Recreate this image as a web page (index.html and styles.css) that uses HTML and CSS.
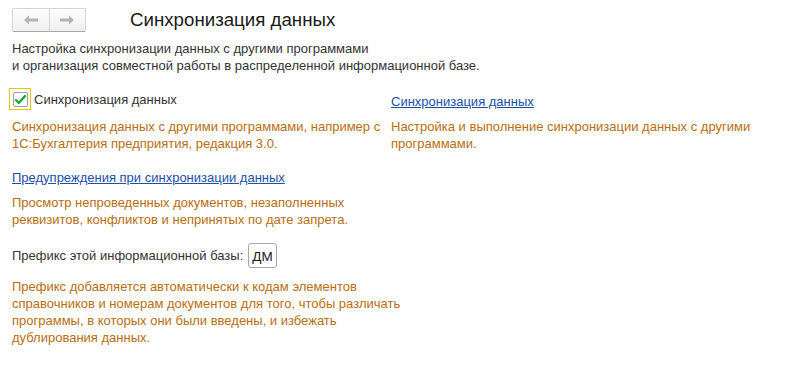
FILE: index.html
```html
<!DOCTYPE html>
<html lang="ru">
<head>
  <meta charset="UTF-8">
  <title>Синхронизация данных</title>
  <link rel="stylesheet" href="styles.css">
</head>
<body>
  <div class="page">
    <div class="header">
      <div class="nav">
        <button class="nav-btn" title="Назад">
          <svg width="16" height="12" viewBox="0 0 16 12"><path d="M1 6 L6 1.5 L6 4.5 L15 4.5 L15 7.5 L6 7.5 L6 10.5 Z" fill="#b4b4b4"/></svg>
        </button>
        <button class="nav-btn" title="Вперед">
          <svg width="16" height="12" viewBox="0 0 16 12"><path d="M15 6 L10 1.5 L10 4.5 L1 4.5 L1 7.5 L10 7.5 L10 10.5 Z" fill="#b4b4b4"/></svg>
        </button>
      </div>
      <h1 class="title">Синхронизация данных</h1>
    </div>

    <p class="intro">Настройка синхронизации данных с другими программами<br>и организация совместной работы в распределенной информационной базе.</p>

    <div class="columns">
      <div class="col-left">
        <label class="check-row">
          <span class="check-focus">
            <span class="check-box">
              <svg width="15" height="13" viewBox="0 0 15 13"><path d="M1.5 6.5 L5.5 10.5 L13.5 1.5" fill="none" stroke="#1aa33a" stroke-width="2.6"/></svg>
            </span>
          </span>
          <span>Синхронизация данных</span>
        </label>
        <p class="hint">Синхронизация данных с другими программами, например с 1С:Бухгалтерия предприятия, редакция 3.0.</p>
      </div>

      <div class="col-right">
        <div class="link-row">
          <a class="link" href="#">Синхронизация данных</a>
        </div>
        <p class="hint">Настройка и выполнение синхронизации данных с другими программами.</p>
      </div>
    </div>

    <div class="lower">
      <a class="link link-block" href="#">Предупреждения при синхронизации данных</a>
      <p class="hint hint-tight">Просмотр непроведенных документов, незаполненных<br>реквизитов, конфликтов и непринятых по дате запрета.</p>

      <div class="prefix-row">
        <span>Префикс этой информационной базы:</span>
        <span class="prefix-input">ДМ</span>
      </div>
      <p class="hint hint-prefix">Префикс добавляется автоматически к кодам элементов<br>справочников и номерам документов для того, чтобы различать<br>программы, в которых они были введены, и избежать<br>дублирования данных.</p>
    </div>
  </div>
</body>
</html>
```

FILE: styles.css
```css
body {
  margin: 0;
  background: #fff;
  font-family: Arial, "Liberation Sans", sans-serif;
  font-size: 13px;
  line-height: 17px;
  color: #333;
}

.page {
  padding: 8px 12px;
}

.header {
  display: flex;
  align-items: center;
  height: 24px;
}

.nav {
  display: flex;
  width: 74px;
  height: 24px;
  box-sizing: border-box;
  border: 1px solid #d4d4d4;
  border-bottom-color: #a8a8a8;
  border-radius: 2px;
  background: linear-gradient(#fdfdfd, #efefef);
}

.nav-btn {
  flex: 1;
  display: flex;
  align-items: center;
  justify-content: center;
  border: none;
  background: none;
  padding: 0;
}

.nav-btn + .nav-btn {
  border-left: 1px solid #d4d4d4;
}

.title {
  margin: 0 0 0 44px;
  font-size: 18.7px;
  font-weight: normal;
  color: #1a1a1a;
  line-height: 24px;
}

.intro {
  margin: 8px 0 0;
}

.columns {
  display: flex;
  margin-top: 14px;
}

.col-left {
  width: 379px;
}

.col-right {
  flex: 1;
}

.check-row {
  display: flex;
  align-items: center;
  height: 22px;
  margin-left: -3px;
}

.check-focus {
  width: 22px;
  height: 22px;
  box-sizing: border-box;
  border: 1px solid #f2c200;
  display: flex;
  align-items: center;
  justify-content: center;
  margin-right: 3px;
}

.check-box {
  width: 15px;
  height: 15px;
  box-sizing: border-box;
  border: 1px solid #a0a0a0;
  border-radius: 2px;
  background: #fff;
  display: flex;
  align-items: center;
  justify-content: center;
}

.link-row {
  height: 22px;
  display: flex;
  align-items: center;
  padding-top: 4px;
  box-sizing: border-box;
}

.link {
  color: #1c4fa8;
  text-decoration: underline;
}

.link-block {
  display: inline-block;
  margin-top: 17px;
}

.hint {
  margin: 8px 0 0;
  color: #b86e12;
}

.hint-tight {
  margin-top: 8px;
}

.prefix-row {
  display: flex;
  align-items: center;
  margin-top: 15px;
  height: 25px;
}

.prefix-input {
  margin-left: 5px;
  height: 25px;
  min-width: 27px;
  box-sizing: border-box;
  border: 1px solid #a8a8a8;
  border-radius: 3px;
  padding: 3px 3px 0;
  font-size: 13.5px;
  line-height: 19px;
  color: #1a1a1a;
}

.hint-prefix {
  margin-top: 10px;
}
```
